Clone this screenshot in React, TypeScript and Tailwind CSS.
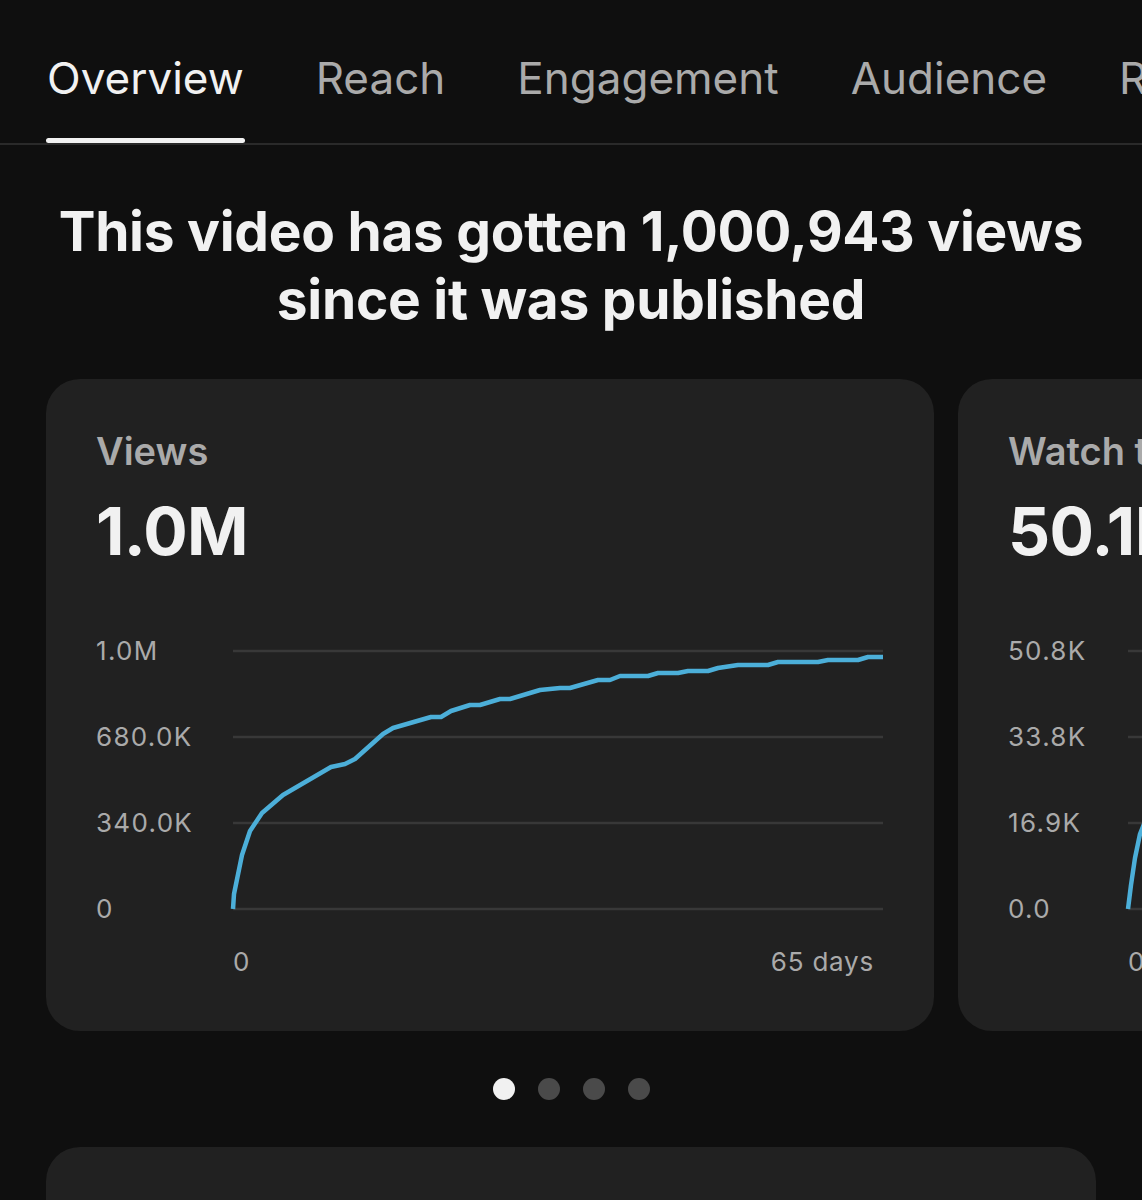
import React from "react";

const tabs = ["Overview", "Reach", "Engagement", "Audience", "Revenue"];

const viewsPts: [number, number][] = [
  [0, 271], [1, 256], [9, 217], [17, 193], [29, 175], [50, 157], [98, 129], [112, 126],
  [122, 121], [150, 96], [160, 90], [198, 79], [208, 79], [218, 73], [237, 67], [247, 67],
  [267, 61], [277, 61], [307, 52], [317, 51], [327, 50], [337, 50], [365, 42], [377, 42],
  [387, 38], [415, 38], [425, 35], [445, 35], [455, 33], [475, 33], [485, 30], [505, 27],
  [535, 27], [545, 24], [585, 24], [595, 22], [625, 22], [635, 19], [650, 19],
];

const watchPts: [number, number][] = [
  [0, 271], [3, 247], [7, 220], [12, 196], [20, 176], [34, 160], [60, 144], [100, 126],
  [150, 104], [200, 88], [260, 74], [330, 62], [400, 52], [470, 44], [540, 36], [600, 30], [650, 26],
];

function toPath(pts: [number, number][]) {
  return pts.map((p, i) => `${i === 0 ? "M" : "L"}${p[0]} ${p[1]}`).join(" ");
}

function Chart({
  labels,
  pts,
  labelCol,
}: {
  labels: string[];
  pts: [number, number][];
  labelCol: string;
}) {
  const grid = [13, 99, 185, 271];
  return (
    <div className="flex flex-col">
      <div className="flex">
        <div className={`${labelCol} h-[284px] flex flex-col justify-between shrink-0`}>
          {labels.map((l) => (
            <div key={l} className="h-[26px] leading-[26px] text-[26px] text-[#aaaaaa] tracking-[0.05em] whitespace-nowrap">
              {l}
            </div>
          ))}
        </div>
        <svg width="650" height="284" viewBox="0 0 650 284" className="shrink-0 overflow-visible">
          {grid.map((y) => (
            <line key={y} x1="0" y1={y} x2="650" y2={y} stroke="#383838" strokeWidth="2.5" />
          ))}
          <path
            d={toPath(pts)}
            fill="none"
            stroke="#4cafd9"
            strokeWidth="4.5"
            strokeLinejoin="round"
          />
        </svg>
      </div>
      <div className="flex">
        <div className={`${labelCol} shrink-0`} />
        <div className="w-[650px] flex justify-between mt-[27px] h-[26px] leading-[26px] text-[26px] text-[#aaaaaa] tracking-[0.03em] shrink-0">
          <span>0</span>
          <span className="pr-[9px]">65 days</span>
        </div>
      </div>
    </div>
  );
}

function Card({
  title,
  value,
  labels,
  pts,
  labelCol,
}: {
  title: string;
  value: string;
  labels: string[];
  pts: [number, number][];
  labelCol: string;
}) {
  return (
    <div className="w-[888px] h-[652px] shrink-0 rounded-[34px] bg-[#212121] pl-[50px] pt-[48px] overflow-hidden">
      <div className="text-[38px] leading-[48px] font-semibold text-[#aaaaaa] whitespace-nowrap">{title}</div>
      <div className="mt-[20px] text-[66px] leading-[72px] font-bold text-[#f1f1f1] tracking-[-0.01em] whitespace-nowrap">
        {value}
      </div>
      <div className="mt-[71px]">
        <Chart labels={labels} pts={pts} labelCol={labelCol} />
      </div>
    </div>
  );
}

export default function App() {
  return (
    <div className="w-[1142px] h-[1200px] overflow-hidden bg-[#0f0f0f] font-['Inter',sans-serif] text-[#f1f1f1]">
      <div className="flex gap-[72px] pl-[47px] border-b-2 border-[#2a2a2a] whitespace-nowrap overflow-hidden">
        {tabs.map((t, i) => (
          <div key={t} className="flex flex-col pt-[56px] shrink-0">
            <div
              className={`text-[44px] leading-[45px] ${i === 0 ? "text-[#f1f1f1]" : "text-[#aaaaaa]"}`}
            >
              {t}
            </div>
            <div
              className={`mt-[37px] h-[5px] rounded-full -mx-[1px] ${i === 0 ? "bg-[#f1f1f1]" : "bg-transparent"}`}
            />
          </div>
        ))}
      </div>

      <div className="mt-[52px] text-center text-[55px] leading-[68px] font-bold tracking-[-0.005em]">
        This video has gotten 1,000,943 views
        <br />
        since it was published
      </div>

      <div className="mt-[46px] flex gap-[24px] pl-[46px] overflow-hidden">
        <Card
          title="Views"
          value="1.0M"
          labels={["1.0M", "680.0K", "340.0K", "0"]}
          pts={viewsPts}
          labelCol="w-[137px]"
        />
        <Card
          title="Watch time (hours)"
          value="50.1K"
          labels={["50.8K", "33.8K", "16.9K", "0.0"]}
          pts={watchPts}
          labelCol="w-[120px]"
        />
      </div>

      <div className="mt-[47px] flex justify-center gap-[23px]">
        <div className="w-[22px] h-[22px] rounded-full bg-[#f1f1f1]" />
        <div className="w-[22px] h-[22px] rounded-full bg-[#4a4a4a]" />
        <div className="w-[22px] h-[22px] rounded-full bg-[#4a4a4a]" />
        <div className="w-[22px] h-[22px] rounded-full bg-[#4a4a4a]" />
      </div>

      <div className="mt-[47px] mx-[46px] h-[200px] rounded-[34px] bg-[#212121]" />
    </div>
  );
}
